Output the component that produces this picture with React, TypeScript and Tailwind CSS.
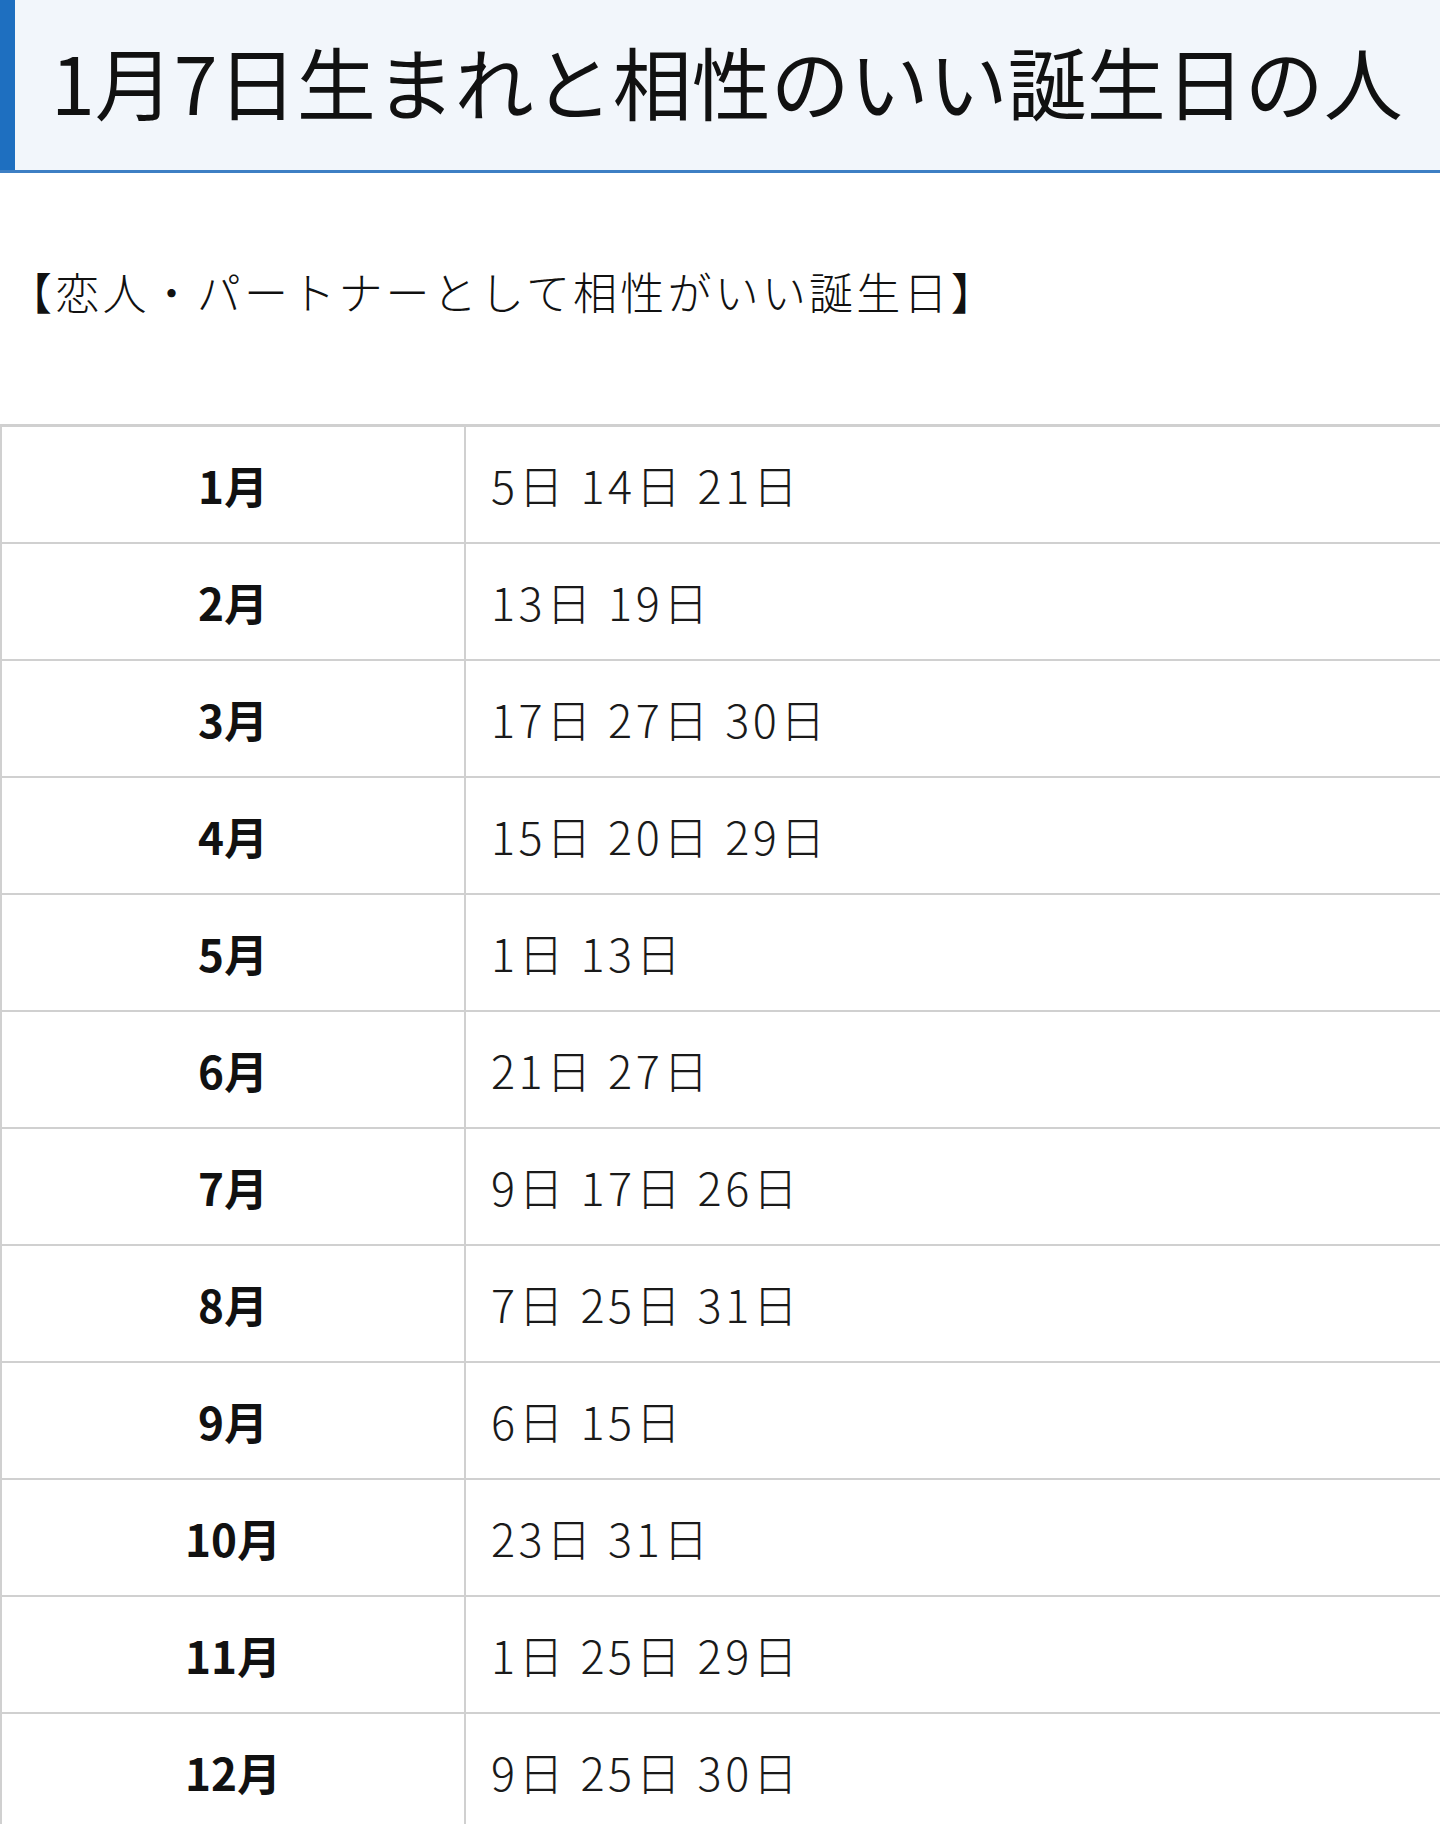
import React from 'react';

const rows: { month: string; days: string[] }[] = [
  { month: '1月', days: ['5日', '14日', '21日'] },
  { month: '2月', days: ['13日', '19日'] },
  { month: '3月', days: ['17日', '27日', '30日'] },
  { month: '4月', days: ['15日', '20日', '29日'] },
  { month: '5月', days: ['1日', '13日'] },
  { month: '6月', days: ['21日', '27日'] },
  { month: '7月', days: ['9日', '17日', '26日'] },
  { month: '8月', days: ['7日', '25日', '31日'] },
  { month: '9月', days: ['6日', '15日'] },
  { month: '10月', days: ['23日', '31日'] },
  { month: '11月', days: ['1日', '25日', '29日'] },
  { month: '12月', days: ['9日', '25日', '30日'] },
];

// light text: try the named light face first, fall back to regular
const light = "font-['Noto_Sans_CJK_JP_Light','Noto_Sans_CJK_JP','Noto_Sans',sans-serif] font-light";

const App: React.FC = () => {
  return (
    <div className="w-[1440px] bg-white text-[#111] font-['Noto_Sans_CJK_JP','Noto_Sans',sans-serif]">
      <header className="flex h-[173px] bg-[#f2f6fb] border-b-[3px] border-[#3d7fc4]">
        <div className="w-[15px] shrink-0 bg-[#1e6fc0]" />
        <h1 className="flex items-center pl-[36px] pb-[10px] text-[79px] font-normal leading-none">
          1月7日生まれと相性のいい誕生日の人
        </h1>
      </header>

      <p className={`${light} pl-[8px] pt-[94px] pb-[109px] text-[44px] leading-[48px] tracking-[3.2px] text-[#111]`}>
        【恋人・パートナーとして相性がいい誕生日】
      </p>

      <div className="border-t-[3px] border-l-2 border-[#d0d0d0]">
        {rows.map(r => (
          <div key={r.month} className="grid grid-cols-[464px_1fr] h-[117px] border-b-2 border-[#d0d0d0]">
            <div className="flex items-center justify-center border-r-2 border-[#d0d0d0] text-[44px] font-bold">
              {r.month}
            </div>
            <div className={`${light} flex items-center pl-[25px] text-[45px] tracking-[3.5px] text-[#1a1a1a]`}>
              {r.days.join(' ')}
            </div>
          </div>
        ))}
      </div>
    </div>
  );
};

export default App;
